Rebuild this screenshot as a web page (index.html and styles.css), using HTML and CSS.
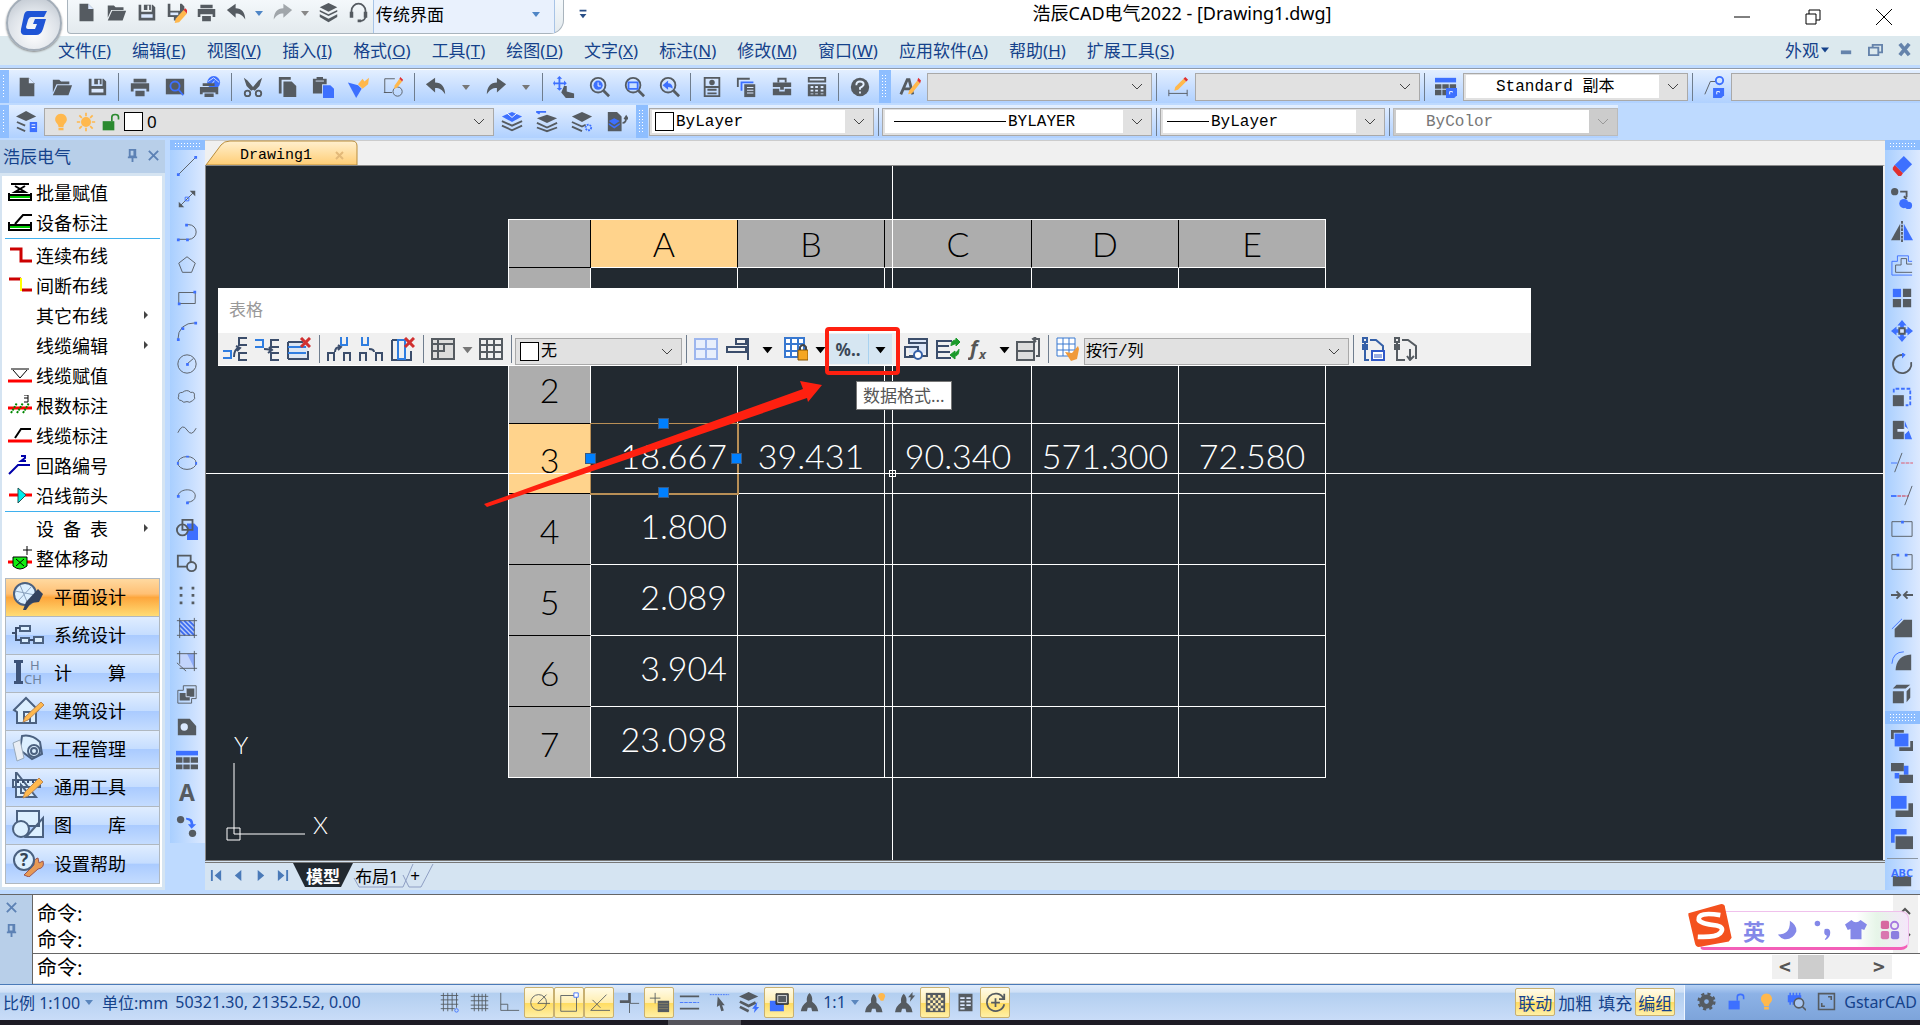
FILE: index.html
```html
<!DOCTYPE html>
<html lang="zh-CN">
  <head>
    <meta charset="UTF-8" />
    <meta name="viewport" content="width=device-width, initial-scale=1.0" />
    <title>浩辰CAD电气2022 - [Drawing1.dwg]</title>
    <link rel="stylesheet" href="styles.css">
  </head>
  <body>
    <!-- Icon sprite -->
    <svg class="sprite" aria-hidden="true">
      <symbol id="new" viewBox="0 0 24 24"><path class="d" d="M4 2h10l6 6v14H4z"/><path class="w" d="M14 2v6h6z"/></symbol>
      <symbol id="open" viewBox="0 0 24 24"><path class="d" d="M2 4h7l2 2h9v3H6L2 18zM7 10h16l-4 11H2z"/></symbol>
      <symbol id="save" viewBox="0 0 24 24"><path class="d" d="M3 3h3v8h12V3h1l3 3v15H3zM9 3h8v6h-2V4h-2v5H9z"/><path class="w" d="M6 14h13v4H6z"/></symbol>
      <symbol id="saveas" viewBox="0 0 24 24"><path class="d" d="M2 2h3v8h11V2h2l3 3v4l-9 12H9v-4H2z"/><path class="w" d="M5 12h9v3H5z"/><path class="o" d="M20 9l4 4-9 10-5 1 1-5z"/><path class="r" d="M20 9l2-2 4 4-2 2z"/></symbol>
      <symbol id="print" viewBox="0 0 24 24"><path class="d" d="M5 3h14v4H5zM2 8h20v9h-3v-3H5v3H2zM7 16h10v6H7z"/></symbol>
      <symbol id="preview" viewBox="0 0 24 24"><path class="d" d="M2 3h20v17H2z"/><circle class="bs" cx="12" cy="11" r="5"/><path class="bs" d="M16 15l5 6"/></symbol>
      <symbol id="publish" viewBox="0 0 24 24"><circle class="b" cx="16" cy="7" r="7"/><path d="M10 6l6-4 6 5M12 11l5-6" fill="none" stroke="#dbe8ff"/><path class="d" d="M4 8h13v3H4zM1 12h20v8h-3v-2H4v2H1zM6 19h10v4H6z"/></symbol>
      <symbol id="cut" viewBox="0 0 24 24"><path class="d" d="M2 2l4 3 6 7 6-7 4-3-3 9-5 5-2-1-2 1-5-5z"/><circle class="s2" cx="6" cy="19" r="3"/><circle class="s2" cx="18" cy="19" r="3"/></symbol>
      <symbol id="copy" viewBox="0 0 24 24"><path class="d" d="M2 1h13v3H5v15H2z"/><path class="d" d="M7 6h9l5 5v12H7z"/></symbol>
      <symbol id="paste" viewBox="0 0 24 24"><path class="d" d="M1 3h4V1h7v2h4v6h-5v10H1z"/><path class="w" d="M4 5h9v1H4z"/><path class="b" d="M12 10h8l4 4v10H12z"/></symbol>
      <symbol id="brush" viewBox="0 0 24 24"><path class="b" d="M1 7l11 3 4 4-6 10z"/><path class="o" d="M12 9l5-6 2 3 5-4-1 7-6 5z"/></symbol>
      <symbol id="edit" viewBox="0 0 24 24"><path class="s" d="M14 3H3v15h8M2 18l3 0"/><circle class="s" cx="17" cy="17" r="5"/><path class="o" d="M19 3l3 3-6 7-3 1 1-4z"/><path class="r" d="M19 3l1-2 3 3-1 2z"/></symbol>
      <symbol id="undo" viewBox="0 0 24 24"><path class="d" d="M1 9l10-7v5c7 0 11 5 11 13-3-5-6-7-11-7v5z"/></symbol>
      <symbol id="redo" viewBox="0 0 24 24"><path class="d" d="M23 9L13 2v5C6 7 2 12 2 20c3-5 6-7 11-7v5z"/></symbol>
      <symbol id="caret" viewBox="0 0 12 12"><path d="M2 4h8L6 9z" fill="currentColor"/></symbol>
      <symbol id="caretbar" viewBox="0 0 12 14"><path d="M2 2h8v2H2zM2 7h8l-4 5z" fill="currentColor"/></symbol>
      <symbol id="stack" viewBox="0 0 24 24"><path class="d" d="M12 1l10 5-10 5L2 6zM2 9l10 5 10-5v2l-10 5-10-5zM2 14l10 5 10-5v3l-10 6-10-6z"/></symbol>
      <symbol id="headset" viewBox="0 0 24 24"><path class="s2" d="M4 15V10a8 8 0 0 1 16 0v6q0 5-6 6"/><path class="d" d="M2 11h4v7H2zM18 11h4v7h-4zM11 20h4v3h-4z"/></symbol>
      <symbol id="pan" viewBox="0 0 24 24"><path class="b" d="M7 0l3 3H8v4h4V5l3 3-3 3V9H8v4h2l-3 3-3-3h2V9H2v2L0 8l2-3v2h4V3H4z"/><path class="d" d="M12 11h3v6l8 2v5H14l-5-6z"/></symbol>
      <symbol id="zoomrt" viewBox="0 0 24 24"><circle class="s2" cx="11" cy="10" r="8"/><circle class="b" cx="11" cy="10" r="5"/><path d="M11 7v4h3" fill="none" stroke="#fff"/><path class="s3" d="M17 16l6 6"/></symbol>
      <symbol id="zoomwin" viewBox="0 0 24 24"><circle class="s2" cx="11" cy="10" r="8"/><path class="bs" d="M6 7h10v7H6z"/><path class="s3" d="M17 16l6 6"/></symbol>
      <symbol id="zoomprev" viewBox="0 0 24 24"><circle class="s2" cx="11" cy="10" r="8"/><path class="b" d="M5 10l6-5v3q5 0 5 6-2-2-5-2v3z"/><path class="s3" d="M17 16l6 6"/></symbol>
      <symbol id="props" viewBox="0 0 24 24"><path class="s2" d="M4 2h16v20H4zM4 12h16M7 15h10M7 19h10"/><circle class="d" cx="12" cy="7" r="3"/></symbol>
      <symbol id="sheets" viewBox="0 0 24 24"><path class="s2" d="M2 12V3h13"/><path class="bs" d="M6 16V7h13"/><path class="d" d="M9 9h12v14H9z"/><path class="w" d="M12 12h7v1h-7zM12 15h7v1h-7zM12 18h7v1h-7z"/></symbol>
      <symbol id="case" viewBox="0 0 24 24"><path class="s2" d="M8 7V3h8v4"/><path class="d" d="M2 7h20v5h-8v3h-4v-3H2zM2 14h7v3h6v-3h7v7H2z"/></symbol>
      <symbol id="calc" viewBox="0 0 24 24"><path class="d" d="M2 1h20v6H2zM2 9h20v13H2z"/><path class="w" d="M4 3h16v2H4zM5 11h3v2H5zM10 11h3v2h-3zM16 11h3v2h-3zM5 15h3v2H5zM10 15h3v2h-3zM16 15h3v2h-3zM5 19h3v1H5zM10 19h3v1h-3zM16 19h3v1h-3z"/></symbol>
      <symbol id="help" viewBox="0 0 24 24"><circle class="d" cx="12" cy="12" r="10"/><path d="M8 10q0-4 4-4t4 3q0 2-4 4v2M12 17v2" fill="none" stroke="#e3efff" stroke-width="2"/></symbol>
      <symbol id="tstyle" viewBox="0 0 24 24"><path class="s3" d="M2 20L9 4h2l4 16M5 14h8"/><path class="o" d="M20 5l3 3-9 11-4 1 1-4z"/><path class="r" d="M20 5l1-3 3 3-1 3z"/></symbol>
      <symbol id="dstyle" viewBox="0 0 24 24"><path class="s" d="M2 15v7M22 15v7M2 19h20"/><path class="o" d="M18 3l3 3-9 9-4 1 1-4z"/><path class="r" d="M18 3l2-2 3 3-2 2z"/></symbol>
      <symbol id="tabstyle" viewBox="0 0 24 24"><path class="b" d="M0 2h23v5H0z"/><path class="d" d="M0 9h7v5H0zM8 9h7v5H8zM16 9h7v5h-7zM0 15h7v6H0zM8 15h5v6H8z"/><path class="b" d="M12 13h12v8l-3 3h-9z"/><path class="ws" d="M16 20v-3h3v1"/></symbol>
      <symbol id="mstyle" viewBox="0 0 24 24"><path class="s" d="M2 20L8 6h6"/><circle class="bs" cx="18" cy="5" r="4"/><path class="b" d="M11 13h12v8l-3 3h-9z"/><path class="ws" d="M15 20v-3h3v1"/></symbol>
      <symbol id="layers" viewBox="0 0 24 24"><path class="d" d="M11 0l11 6-11 5L0 6z"/><path class="s2" d="M1 12l9 4M1 18l9 4"/><path class="b" d="M15 12h8v11h-8z"/><path class="ws" d="M17 15h4M17 18h4"/></symbol>
      <symbol id="lay1" viewBox="0 0 24 24"><path class="b" d="M12 1l11 5-11 6L1 6z"/><path class="ws" d="M6 2l6 5 6-5"/><path class="s2" d="M1 11l11 5 11-5M1 16l11 5 11-5"/></symbol>
      <symbol id="lay2" viewBox="0 0 24 24"><path class="d" d="M12 4l11 4-11 5L1 8z"/><path class="s2" d="M1 13l11 5 11-5M1 18l11 4 11-4"/><path class="bs" d="M11 1H1m3-2L1 1l3 2"/></symbol>
      <symbol id="lay3" viewBox="0 0 24 24"><path class="d" d="M12 1l11 5-11 6L1 6z"/><path class="s2" d="M1 12l11 5 4-2M1 17l11 5"/><circle class="bs" cx="19" cy="18" r="3" stroke-dasharray="2 1"/></symbol>
      <symbol id="lay4" viewBox="0 0 24 24"><path class="d" d="M2 1h10l5 5v16H2z"/><path class="b" d="M9 8l6 3-6 4-6-4zM3 13l6 4 6-4v2l-6 4-6-4z"/><path class="s2" d="M18 13q4 0 4-6m-2 2l2-3 2 3"/></symbol>
      <symbol id="bulb" viewBox="0 0 24 24"><path class="o" d="M12 2c5 0 7 4 7 7 0 4-4 5-4 9H9c0-4-4-5-4-9 0-3 2-7 7-7zM9 19h6v3H9z"/></symbol>
      <symbol id="sun" viewBox="0 0 24 24"><circle class="o" cx="12" cy="12" r="6"/><path d="M12 1v4M12 19v4M1 12h4M19 12h4M4 4l3 3M17 17l3 3M4 20l3-3M17 7l3-3" stroke="#ffb84d" stroke-width="2"/></symbol>
      <symbol id="unlock" viewBox="0 0 24 24"><path d="M2 11h14v11H2z" fill="currentColor"/><path d="M13 11V6q0-3 4-3t4 3v3" fill="none" stroke="currentColor" stroke-width="2"/></symbol>
      <symbol id="chev" viewBox="0 0 12 12"><path d="M1 3l5 5 5-5" fill="none" stroke="currentColor"/></symbol>
      <symbol id="pin" viewBox="0 0 14 14"><path d="M4 1h6v7H4zM2 9h10M7 9v5M9 1v7" fill="none" stroke="currentColor" stroke-width="2"/></symbol>
      <symbol id="close" viewBox="0 0 14 14"><path d="M2 2l10 10M12 2L2 12" fill="none" stroke="currentColor" stroke-width="2"/></symbol>

      <!-- draw toolbar -->
      <symbol id="line" viewBox="0 0 24 24"><path class="s" d="M3 21L21 3"/><path class="b" d="M1 20h3v3H1zM20 1h3v3h-3z"/></symbol>
      <symbol id="ray" viewBox="0 0 24 24"><path class="s" d="M4 20L20 4"/><path class="d" d="M21 3v6l-6-6zM3 21v-6l6 6z"/><path class="bs1" d="M10 10h4v4h-4z"/></symbol>
      <symbol id="pline" viewBox="0 0 24 24"><path class="s" d="M2 20h12a8 8 0 0 0 0-16h-3"/><path class="b" d="M1 19h3v3H1zM11 19h3v3h-3zM10 3h3v3h-3z"/></symbol>
      <symbol id="polygon" viewBox="0 0 24 24"><path class="s" d="M12 3l9 7-4 10H7L3 10z"/></symbol>
      <symbol id="rect" viewBox="0 0 24 24"><path class="s" d="M3 6h18v12H3z"/><path class="b" d="M2 17h3v3H2zM19 4h3v3h-3z"/></symbol>
      <symbol id="arc" viewBox="0 0 24 24"><path class="s" d="M2 22Q2 3 22 3"/><path class="b" d="M1 20h3v3H1zM6 8h3v3H6zM20 2h3v3h-3z"/></symbol>
      <symbol id="circle" viewBox="0 0 24 24"><circle class="s" cx="12" cy="12" r="10"/><path class="s" d="M12 12l7-6"/><path class="b" d="M11 11h3v3h-3z"/></symbol>
      <symbol id="cloud" viewBox="0 0 24 24"><path class="s" d="M7 7q5-4 9 0 5-1 4 4 2 3-2 5-3 3-6 1-4 2-6-1-5-1-3-5-1-4 4-4z"/></symbol>
      <symbol id="spline" viewBox="0 0 24 24"><path class="s" d="M2 15Q7 4 12 12t10-2"/></symbol>
      <symbol id="ellipse" viewBox="0 0 24 24"><ellipse class="s" cx="12" cy="12" rx="10" ry="7"/><path class="b" d="M1 11h2v3H1zM21 11h2v3h-2zM11 4h3v2h-3z"/></symbol>
      <symbol id="earc" viewBox="0 0 24 24"><path class="s" d="M2 12C4 3 21 3 21 12q0 6-9 7"/><path class="b" d="M1 11h3v3H1zM11 18h3v3h-3z"/></symbol>
      <symbol id="block" viewBox="0 0 24 24"><path class="b" d="M12 6h8l4 4v14H12z"/><circle class="s2" cx="7" cy="13" r="6"/><path class="s2" d="M7 2h11v11H7z"/></symbol>
      <symbol id="mkblock" viewBox="0 0 24 24"><path class="s2" d="M13 17H2V5h14v7"/><circle class="s2" cx="17" cy="17" r="5"/></symbol>
      <symbol id="points" viewBox="0 0 24 24"><path class="d" d="M4 3h3v3H4zM17 3h3v3h-3zM4 11h3v3H4zM17 11h3v3h-3zM4 19h3v3H4zM17 19h3v3h-3z"/></symbol>
      <symbol id="hatch" viewBox="0 0 24 24"><path d="M4 4h16v16H4z" fill="#b9cdfa"/><path d="M4 4l16 16M9 4l11 11M14 4l6 6M4 9l11 11M4 14l6 6" stroke="#3d6cf0" stroke-width="2"/><path class="s" d="M1 4h22M1 20h22M4 1v22M20 1v22"/></symbol>
      <symbol id="gradient" viewBox="0 0 24 24"><path d="M4 4h16v16H4z" fill="#c3d4fc"/><path d="M12 4h8v16z" fill="#8eabf8"/><path class="s" d="M1 4h22M4 20h19M4 1v14M20 1v22M1 14l10 9"/></symbol>
      <symbol id="boundary" viewBox="0 0 24 24"><path class="d" d="M11 6h9v9h-5v4H4v-8h7z"/><path class="s" d="M8 3h14v14h-5v5H2V8h6z"/><path d="M11 6v5M11 11v4h4" fill="none" stroke="#dce8ff"/></symbol>
      <symbol id="wipe" viewBox="0 0 24 24"><path class="d" d="M2 3h13l7 8v10H2z"/><circle class="w" cx="9" cy="12" r="4"/></symbol>
      <symbol id="table" viewBox="0 0 24 24"><path class="b" d="M0 2h24v5H0z"/><path class="d" d="M0 9h7v6H0zM8 9h7v6H8zM16 9h8v6h-8zM0 17h7v5H0zM8 17h7v5H8zM16 17h8v5h-8z"/></symbol>
      <symbol id="text" viewBox="0 0 24 24"><text class="d" x="12" y="21" font-size="25" font-weight="700" text-anchor="middle">A</text></symbol>
      <symbol id="addsel" viewBox="0 0 24 24"><circle class="d" cx="5" cy="5" r="4"/><circle class="d" cx="18" cy="20" r="4"/><path class="b" d="M11 3q8 0 8 7h3l-5 5-4-5h3q0-4-5-5z"/></symbol>

      <!-- modify toolbar -->
      <symbol id="erase" viewBox="0 0 24 24"><path class="b" d="M14 1l9 9-10 10L4 11z"/><path class="r" d="M4 11l9 9-2 3H8l-6-7v-2z"/></symbol>
      <symbol id="copyobj" viewBox="0 0 24 24"><circle class="d" cx="4" cy="4" r="4"/><path class="s2" d="M10 4h7v6m-3-1l3 3"/><circle class="b" cx="14" cy="17" r="5"/><circle class="b" cx="19" cy="19" r="4"/></symbol>
      <symbol id="mirror" viewBox="0 0 24 24"><path class="d" d="M10 3v18H0z"/><path class="b" d="M14 3v18h10z"/><path class="s2" d="M12 0v24" stroke-dasharray="3 1"/></symbol>
      <symbol id="offset" viewBox="0 0 24 24"><path class="s" d="M23 11h-6V5h-6v7H5v8h18"/><path class="bs1" d="M23 8h-4V2H7v6H1v15h22"/></symbol>
      <symbol id="array" viewBox="0 0 24 24"><path class="b" d="M2 2h9v9H2z"/><path class="d" d="M13 2h9v9h-9zM2 13h9v9H2zM13 13h9v9h-9z"/></symbol>
      <symbol id="move" viewBox="0 0 24 24"><path class="b" d="M12 0l5 6h-3v4h4V7l6 5-6 5v-3h-4v4h3l-5 6-5-6h3v-4H6v3l-6-5 6-5v3h4V6H7z"/><path d="M9 9h6v6H9z" fill="#dbe8ff" stroke="#555b61" stroke-width="2"/></symbol>
      <symbol id="rotate" viewBox="0 0 24 24"><path class="s2" d="M12 2a10 10 0 1 0 10 8"/><path class="b" d="M12-1l4 3-4 4z"/></symbol>
      <symbol id="scale" viewBox="0 0 24 24"><path class="d" d="M2 10h12v12H2z"/><path class="bs" d="M3 7V3h18v18h-5" stroke-dasharray="4 2"/></symbol>
      <symbol id="stretch" viewBox="0 0 24 24"><path class="d" d="M2 2h12v20H2z"/><path class="b" d="M15 2l8 20h-8z"/><path class="w" d="M7 11h8V8l5 4-5 5v-3H7z"/></symbol>
      <symbol id="trim" viewBox="0 0 24 24"><path class="s" d="M12 1L4 22"/><path class="bs1" d="M0 12h7"/><path d="M11 12h13" stroke="#e05060" stroke-dasharray="4 1"/></symbol>
      <symbol id="extend" viewBox="0 0 24 24"><path class="s" d="M23 1l-8 21"/><path class="bs" d="M0 12h6"/><path d="M7 12h12" stroke="#d02030" stroke-dasharray="4 1"/></symbol>
      <symbol id="breakpt" viewBox="0 0 24 24"><path class="s" d="M1 4h22v16H1z"/><path class="b" d="M11 3h3v3h-3z"/></symbol>
      <symbol id="break" viewBox="0 0 24 24"><path class="s" d="M7 4H1v16h22V4h-6"/><path class="b" d="M6 3h3v3H6zM15 3h3v3h-3z"/></symbol>
      <symbol id="join" viewBox="0 0 24 24"><path class="s2" d="M0 12h10M6 8l4 4-4 4M24 12H14M18 8l-4 4 4 4"/></symbol>
      <symbol id="chamfer" viewBox="0 0 24 24"><path class="d" d="M14 3h9v19H4v-9z"/><path class="bs1" d="M1 13L12 2"/></symbol>
      <symbol id="fillet" viewBox="0 0 24 24"><path class="d" d="M22 5v17H5Q6 6 22 5z"/><path class="bs1" d="M1 15Q2 2 14 2"/></symbol>
      <symbol id="explode" viewBox="0 0 24 24"><path class="d" d="M2 9h12v13H2zM2 6l4-4h15l-5 4zM17 9l4-4v11l-4 5z"/></symbol>
      <symbol id="front" viewBox="0 0 24 24"><path class="d" d="M0 1h14v3H3v7H0zM21 13h3v11H9v-4h12z"/><path class="b" d="M4 5h15v14H4z"/></symbol>
      <symbol id="back" viewBox="0 0 24 24"><path class="b" d="M14 4h5v10h-5zM4 12h5v6H4z"/><path class="d" d="M0 1h14v9H0zM9 14h15v9H9z"/></symbol>
      <symbol id="above" viewBox="0 0 24 24"><path class="d" d="M19 9h5v15H5v-7h14z"/><path class="b" d="M0 1h17v14H0z"/></symbol>
      <symbol id="below" viewBox="0 0 24 24"><path class="b" d="M0 1h17v6H4v9H0z"/><path class="d" d="M5 9h19v14H5z"/></symbol>
      <symbol id="abc" viewBox="0 0 24 24"><path class="d" d="M2 10h20v11H2z"/><text class="b" x="12" y="11" font-size="12" font-weight="700" text-anchor="middle">ABC</text></symbol>

      <!-- electrical palette -->
      <symbol id="e1" viewBox="0 0 24 20"><path class="k" d="M3 2h18M7 4l10 6H7l10-6M1 13h22"/><path d="M2 15h20" stroke="#0c0" stroke-width="2"/><path class="k" d="M1 11v7h22v-7"/></symbol>
      <symbol id="e2" viewBox="0 0 24 20"><path class="k" d="M7 12l8-9h9M1 13h22M1 10v8h22v-8"/><path d="M2 15h20" stroke="#0c0" stroke-width="2"/></symbol>
      <symbol id="e3" viewBox="0 0 24 20"><path d="M2 4h11v12h11" fill="none" stroke="#c00" stroke-width="3"/></symbol>
      <symbol id="e4" viewBox="0 0 24 20"><path d="M1 4h12M14 15h10" stroke="#c00" stroke-width="3"/><path d="M13 3v13" stroke="#ff0" stroke-width="2"/></symbol>
      <symbol id="e5" viewBox="0 0 24 20"><path d="M3 4h18M5 5l7 8 7-8" fill="none" stroke="#000"/><path class="rl" d="M0 16h24"/></symbol>
      <symbol id="e6" viewBox="0 0 24 20"><path class="rl" d="M0 13h24"/><path d="M3 18l6-10M9 18l6-10M15 18l6-10" stroke="#080" stroke-width="2" stroke-dasharray="2 1"/><path d="M16 0h4v7h-4M16 3h4" fill="none" stroke="#000"/></symbol>
      <symbol id="e7" viewBox="0 0 24 20"><path class="k" d="M7 13l6-9h10"/><path class="rl" d="M0 16h24"/></symbol>
      <symbol id="e8" viewBox="0 0 24 20"><path d="M1 19l9-9h12M13 1h4v2l-4 3h5" fill="none" stroke="#00a" stroke-width="2"/></symbol>
      <symbol id="e9" viewBox="0 0 24 20"><path class="rl" d="M1 10h23"/><path d="M10 3l8 7-8 8z" fill="#0ee" stroke="#255"/></symbol>
      <symbol id="e10" viewBox="0 0 24 24"><path class="rl" d="M0 16h24"/><path d="M5 11h14v9q-7 6-14 0z" fill="#1e1" stroke="#000"/><path d="M8 13l8 7M16 13l-8 7M15 4h9M19 0v9" stroke="#000"/></symbol>

      <symbol id="m1" viewBox="0 0 32 28"><circle class="nf" cx="13" cy="12" r="11"/><path d="M3 9l20 4M8 3l8 19M20 4L6 19" stroke="#8ba3bf"/><path d="M14 20l12-13 5 5-4 8-8 1-5 7h-3z" fill="#34435e"/></symbol>
      <symbol id="m2" viewBox="0 0 32 28"><path class="nf" d="M8 6h10v5H8zM9 18h8v5H9zM22 17h9v6h-9z"/><path class="n" d="M17 20h5M8 8H4v12h5M0 13h4"/></symbol>
      <symbol id="m3" viewBox="0 0 32 28"><path d="M2 2h9v3H9v18h2v3H2v-3h2V5H2z" fill="#3d5379"/><text x="18" y="12" font-size="13" fill="#6d819c">H</text><text x="12" y="26" font-size="13" fill="#6d819c">CH</text></symbol>
      <symbol id="m4" viewBox="0 0 32 28"><path class="nf" d="M2 14L14 2l12 12-2 2v11H5V16zM12 27V16h6v11"/><path d="M29 6l3 3-16 15-5 2 2-5z" fill="#ffb84d" stroke="#b85"/></symbol>
      <symbol id="m5" viewBox="0 0 32 28"><path class="nf" d="M10 2q10-2 18 6l2 12-10 5-12-9z"/><path d="M1 9l7-3 4 18-7 3z" fill="#e9eef5" stroke="#9ab"/><circle class="nf" cx="22" cy="17" r="6"/><circle class="nf" cx="22" cy="17" r="3"/></symbol>
      <symbol id="m6" viewBox="0 0 32 28"><path class="nf" d="M4 0l20 25H4zM9 13l7 8H9zM1 8h27v7H1z"/><path class="n" d="M6 8v3M11 8v3M16 8v3M21 8v3"/><path d="M27 6l4 4-15 14-5 2 2-6z" fill="#ffb84d" stroke="#b85"/></symbol>
      <symbol id="m7" viewBox="0 0 32 28"><path class="nf" d="M5 1h22v15H5zM31 8v19H14z"/><circle class="nf" cx="9" cy="19" r="8"/></symbol>
      <symbol id="m8" viewBox="0 0 32 28"><path d="M12 26l10-10q-1-6 4-7l1 5 4-2q2 7-5 8l-9 8z" fill="#e79a55" stroke="#955"/><circle class="nf" cx="12" cy="11" r="10"/><text x="12" y="17" font-size="17" font-weight="700" fill="#345" text-anchor="middle">?</text></symbol>

      <!-- table panel -->
      <symbol id="t1" viewBox="0 0 24 24"><path class="n" d="M24 1h-8v7h8M24 16h-8v7h8M11 20q0-8 5-9m-3-2l4 2-3 3"/><path class="bl" d="M0 14h8v7H0"/></symbol>
      <symbol id="t2" viewBox="0 0 24 24"><path class="n" d="M24 3h-8v7h8M24 16h-8v7h8M9 12q3 0 7 1m-2-3l3 3-4 3"/><path class="bl" d="M0 3h8v7H0"/></symbol>
      <symbol id="t3" viewBox="0 0 24 24"><path d="M1 5h20v17H1z" fill="#dce6f3"/><path class="n" d="M1 5h15M1 22h20v-8M1 5v17"/><path class="bl" d="M1 10h18M1 16h18"/><path class="x" d="M14 1l9 9M23 1l-9 9"/></symbol>
      <symbol id="t4" viewBox="0 0 24 24"><path class="n" d="M1 24v-8h6v8M17 24v-8h6v8M8 15q0-5 5-5m-2-2l3 2-3 3"/><path class="bl" d="M14 0v8h6V0"/></symbol>
      <symbol id="t5" viewBox="0 0 24 24"><path class="n" d="M1 24v-8h6v8M17 24v-8h6v8M10 12q5 0 5 3"/><path class="bl" d="M3 0v8h6V0"/></symbol>
      <symbol id="t6" viewBox="0 0 24 24"><path class="n" d="M1 3v20h19v-9M1 3h10"/><path class="bl" d="M7 3v19h7V3z"/><path class="x" d="M14 1l9 9M23 1l-9 9"/></symbol>
      <symbol id="t7" viewBox="0 0 24 24"><path d="M1 2h22v20H1z" fill="#dcdcdc"/><path class="s2" d="M1 2h22v20H1zM1 7h22M7 2v20M7 14h6v-7M1 14h6"/></symbol>
      <symbol id="t8" viewBox="0 0 24 24"><path class="s2" d="M1 2h22v20H1zM1 8h22M1 15h22M8 2v20M15 2v20"/></symbol>
      <symbol id="t9" viewBox="0 0 24 24"><path d="M1 2h22v20H1zM12 2v20M1 12h22" fill="#e8effc" stroke="#9db6ee" stroke-width="2"/></symbol>
      <symbol id="t10" viewBox="0 0 24 24"><path class="n" d="M22 1v22M10 2h10v5H10zM1 10h19v5H1z"/></symbol>
      <symbol id="t11" viewBox="0 0 24 24"><path d="M1 1h19v19H1zM7 1v19M14 1v19M1 7h19M1 14h19" fill="#fff" stroke="#3878d0" stroke-width="2"/><path d="M14 13h10v10H14z" fill="#f5a623" stroke="#850"/><path d="M16 13v-3q3-4 6 0v3" fill="none" stroke="#444" stroke-width="2"/></symbol>
      <symbol id="t12" viewBox="0 0 24 24"><path d="M5 2h18v14H5z" fill="#dce6f8"/><path class="n" d="M5 7V2h18v17H5M5 6h18M1 10h13v10H1z"/><circle cx="14" cy="18" r="4" fill="#fff" stroke="#3560a8" stroke-width="2"/></symbol>
      <symbol id="t13" viewBox="0 0 24 24"><path class="n" d="M16 4H1v5h12M1 9v6h13M1 15v6h14"/><path d="M15 9q0-6 5-6V1l4 4-4 4V7M23 12q0 7-4 7v3l-5-4 5-4v2" fill="#1a9a2a" stroke="#1a9a2a"/></symbol>
      <symbol id="t14" viewBox="0 0 24 24"><text x="2" y="18" font-size="20" font-style="italic" font-weight="700" fill="#555">f</text><text x="11" y="22" font-size="13" font-style="italic" font-weight="700" fill="#555">x</text></symbol>
      <symbol id="t15" viewBox="0 0 24 24"><path d="M1 5h17v18H1z" fill="#ddd"/><path class="s2" d="M1 5h17v18H1zM1 14h17M20 19h3V2h-6m3-2l-3 2 3 3"/></symbol>
      <symbol id="t16" viewBox="0 0 24 24"><path d="M1 1h18v18H1zM7 1v18M13 1v18M1 7h18M1 13h18" fill="#fff" stroke="#3878d0"/><path d="M9 15l7 1 6-7 1 3-2 10-6 2z" fill="#f09a3a"/></symbol>
      <symbol id="t17" viewBox="0 0 24 24"><path d="M2 1h4v4H2zM2 8h4v4H2zM4 5v18h4M9 3h6l7 6v4" fill="none" stroke="#3560a8" stroke-width="2"/><path d="M11 14h12v9H11z" fill="#fff" stroke="#3058c8" stroke-width="2"/><path d="M13 18h8M13 20h8" stroke="#3058c8"/></symbol>
      <symbol id="t18" viewBox="0 0 24 24"><path class="s2" d="M2 1h4v4H2zM2 8h4v4H2zM4 5v18h8M9 3h6l8 6v13M17 12v10m-3-3l3 4 4-4"/></symbol>

      <!-- status bar -->
      <symbol id="s1" viewBox="0 0 24 24"><path class="s" d="M2 4h20M2 9h20M2 14h20M2 19h16M5 1v21M10 1v21M15 1v21M20 1v17"/><circle class="bs1" cx="20" cy="21" r="2"/></symbol>
      <symbol id="s2" viewBox="0 0 24 24"><path class="s" d="M2 5h20M2 10h20M2 15h20M2 19h20M6 2v20M11 2v20M15 2v20M19 2v20"/></symbol>
      <symbol id="s3" viewBox="0 0 24 24"><path class="s" d="M2 1v20h21M2 14h8v7"/></symbol>
      <symbol id="s4" viewBox="0 0 24 24"><circle class="s" cx="11" cy="12" r="9"/><path class="s" d="M10 13h14M10 13L20 3"/></symbol>
      <symbol id="s5" viewBox="0 0 24 24"><path class="s" d="M2 4h18v18H2z"/><path d="M17 1h5v5h-5z" fill="#fff" stroke="#3d70ff"/></symbol>
      <symbol id="s6" viewBox="0 0 24 24"><path class="s" d="M20 3L2 21h22M4 9l9 9"/></symbol>
      <symbol id="s7" viewBox="0 0 24 24"><path class="s3" d="M1 11h11V1"/><path class="s" d="M12 24V13h11"/></symbol>
      <symbol id="s8" viewBox="0 0 24 24"><path class="s" d="M1 7h12M7 1v12"/><path class="d" d="M10 10h13v13H10z"/><path d="M11 13h11M11 16h11M11 19h11" stroke="#8a8468"/></symbol>
      <symbol id="s9" viewBox="0 0 24 24"><path class="s2" d="M1 5h22M1 19h22"/><path class="bs1" d="M1 12h22" stroke-dasharray="4 1"/></symbol>
      <symbol id="s10" viewBox="0 0 24 24"><path class="bs1" d="M1 3h22" stroke-dasharray="2 1"/><path class="d" d="M10 5l8 10h-3l2 6-3 1-2-7-3 2z"/></symbol>
      <symbol id="s11" viewBox="0 0 24 24"><path class="d" d="M11 0l11 5-11 5L0 5z"/><path class="s3" d="M1 11l10 5 8-4M1 17l10 5"/><path class="b" d="M21 11l-6 8h3l-1 5 6-7h-3z"/></symbol>
      <symbol id="s12" viewBox="0 0 24 24"><path class="b" d="M1 10h16v12H1z"/><path d="M8 2h14v12H8z" fill="#555b61" stroke="#222"/><path d="M10 4h10v8H10z" fill="none" stroke="#ddd"/></symbol>
      <symbol id="s13" viewBox="0 0 24 24"><path class="d" d="M12 1q4 4 3 10 6 4 7 11h-7l-1-4h-4l-1 4H2q1-7 7-11-1-6 3-10z"/></symbol>
      <symbol id="s14" viewBox="0 0 24 24"><path class="d" d="M10 2q4 4 3 10 6 4 7 11h-7l-1-4H8l-1 4H0q1-7 7-11-1-6 3-10z"/><path class="o" d="M19 1q4 0 4 4l-2 5h-3l-3-5q0-4 4-4z"/></symbol>
      <symbol id="s15" viewBox="0 0 24 24"><path class="d" d="M10 2q4 4 3 10 6 4 7 11h-7l-1-4H8l-1 4H0q1-7 7-11-1-6 3-10zM20 0l-5 6h3l-1 5 6-7h-3z"/></symbol>
      <symbol id="s16" viewBox="0 0 24 24"><path class="d" d="M1 1h22v22H1z"/><path d="M3 5h18M3 11h18M3 17h18" stroke="#ffedb0" stroke-width="3" stroke-dasharray="3 3"/><path d="M6 8h15M6 14h15M6 20h15" stroke="#ffedb0" stroke-width="3" stroke-dasharray="3 3"/></symbol>
      <symbol id="s17" viewBox="0 0 24 24"><path class="d" d="M4 2h16v20H4z"/><path class="w" d="M6 6h5v2H6zM13 6h5v2h-5zM6 10h5v2H6zM13 10h5v2h-5zM6 14h5v2H6zM13 14h5v2h-5zM6 18h5v2H6z"/></symbol>
      <symbol id="s18" viewBox="0 0 24 24"><path class="s2" d="M21 7a10 10 0 1 0 1 7M22 2v6h-6M7 12h10M12 7v10"/></symbol>
      <symbol id="gear" viewBox="0 0 24 24"><circle cx="12" cy="12" r="6" fill="none" stroke="#555b61" stroke-width="6"/><circle cx="12" cy="12" r="10" fill="none" stroke="#555b61" stroke-width="3" stroke-dasharray="4 4"/></symbol>
      <symbol id="chip" viewBox="0 0 24 24"><path class="b" d="M1 4h17v9H1z"/><path class="bs" d="M4 1v15M8 1v15M12 1v5M16 1v5"/><circle cx="15" cy="14" r="6" fill="#aac6f0" stroke="#555b61" stroke-width="2"/><path class="s2" d="M19 18l5 5"/></symbol>
      <symbol id="full" viewBox="0 0 24 24"><path class="s2" d="M2 2h20v20H2zM14 6h4v4M6 14v4h4"/></symbol>
    </svg>

    <header class="titlebar">
      <div class="quick">
        <button class="qb" title="新建"><svg><use href="#new"/></svg></button>
        <button class="qb" title="打开"><svg><use href="#open"/></svg></button>
        <button class="qb" title="保存"><svg><use href="#save"/></svg></button>
        <button class="qb" title="另存为"><svg><use href="#saveas"/></svg></button>
        <button class="qb" title="打印"><svg><use href="#print"/></svg></button>
        <button class="qb" title="放弃"><svg><use href="#undo"/></svg></button>
        <button class="qc" title="放弃列表"><svg><use href="#caret"/></svg></button>
        <button class="qb dim" title="重做"><svg><use href="#redo"/></svg></button>
        <button class="qc gray" title="重做列表"><svg><use href="#caret"/></svg></button>
        <button class="qb" title="图层"><svg><use href="#stack"/></svg></button>
        <button class="qb" title="客服"><svg><use href="#headset"/></svg></button>
        <label class="workspace">
          <select aria-label="工作空间"><option>传统界面</option></select>
          <svg><use href="#caret"/></svg>
        </label>
      </div>
      <button class="customize" title="自定义"><svg><use href="#caretbar"/></svg></button>
      <h1 class="caption">浩辰CAD电气2022 - [Drawing1.dwg]</h1>
      <div class="winbtns">
        <button title="最小化"><svg viewBox="0 0 16 16"><path d="M0 8h16"/></svg></button>
        <button title="还原"><svg viewBox="0 0 16 16"><path d="M1 5h10v10H1zM4 5V1h11v10h-4"/></svg></button>
        <button title="关闭"><svg viewBox="0 0 16 16"><path d="M0 0l16 16M16 0L0 16"/></svg></button>
      </div>
      <button class="applogo" title="浩辰">
        <svg viewBox="0 0 28 28"><path d="M8 2h19l-3 6H11q-2 0-3 3l-2 7q0 2 2 2h7l2-5h-4l2-5h11l-3 10q-2 6-7 6H5q-5 0-4-6L4 6q1-4 4-4z" fill="#1f55d6"/></svg>
      </button>
    </header>

    <nav class="menubar">
      <a href="#">文件(<u>F</u>)</a>
      <a href="#">编辑(<u>E</u>)</a>
      <a href="#">视图(<u>V</u>)</a>
      <a href="#">插入(<u>I</u>)</a>
      <a href="#">格式(<u>O</u>)</a>
      <a href="#">工具(<u>T</u>)</a>
      <a href="#">绘图(<u>D</u>)</a>
      <a href="#">文字(<u>X</u>)</a>
      <a href="#">标注(<u>N</u>)</a>
      <a href="#">修改(<u>M</u>)</a>
      <a href="#">窗口(<u>W</u>)</a>
      <a href="#">应用软件(<u>A</u>)</a>
      <a href="#">帮助(<u>H</u>)</a>
      <a href="#">扩展工具(<u>S</u>)</a>
      <div class="mdi">
        <button class="look">外观<svg><use href="#caret"/></svg></button>
        <button title="最小化"><svg viewBox="0 0 16 16"><path d="M2 11h11" stroke-width="4"/></svg></button>
        <button title="还原"><svg viewBox="0 0 16 16"><path d="M1 6h10v8H1zM5 6V3h10v8h-4" stroke-width="2"/></svg></button>
        <button title="关闭"><svg viewBox="0 0 16 16"><path d="M3 2l10 12M13 2L3 14" stroke-width="4"/></svg></button>
      </div>
    </nav>

    <div class="toolbars">
      <div class="toolbar grow">
        <i class="grip"></i>
        <button class="tb" title="新建"><svg><use href="#new"/></svg></button>
        <button class="tb" title="打开"><svg><use href="#open"/></svg></button>
        <button class="tb" title="保存"><svg><use href="#save"/></svg></button>
        <i class="sep"></i>
        <button class="tb" title="打印"><svg><use href="#print"/></svg></button>
        <button class="tb" title="预览"><svg><use href="#preview"/></svg></button>
        <button class="tb" title="发布"><svg><use href="#publish"/></svg></button>
        <i class="sep"></i>
        <button class="tb" title="剪切"><svg><use href="#cut"/></svg></button>
        <button class="tb" title="复制"><svg><use href="#copy"/></svg></button>
        <button class="tb" title="粘贴"><svg><use href="#paste"/></svg></button>
        <button class="tb" title="特性匹配"><svg><use href="#brush"/></svg></button>
        <button class="tb" title="块编辑"><svg><use href="#edit"/></svg></button>
        <i class="sep"></i>
        <button class="tb" title="放弃"><svg><use href="#undo"/></svg></button>
        <button class="tc" title="放弃列表"><svg><use href="#caret"/></svg></button>
        <button class="tb" title="重做"><svg><use href="#redo"/></svg></button>
        <button class="tc" title="重做列表"><svg><use href="#caret"/></svg></button>
        <i class="sep"></i>
        <button class="tb" title="平移"><svg><use href="#pan"/></svg></button>
        <button class="tb" title="实时缩放"><svg><use href="#zoomrt"/></svg></button>
        <button class="tb" title="窗口缩放"><svg><use href="#zoomwin"/></svg></button>
        <button class="tb" title="缩放上一个"><svg><use href="#zoomprev"/></svg></button>
        <i class="sep"></i>
        <button class="tb" title="特性"><svg><use href="#props"/></svg></button>
        <button class="tb" title="图纸集"><svg><use href="#sheets"/></svg></button>
        <button class="tb" title="工具选项板"><svg><use href="#case"/></svg></button>
        <button class="tb" title="计算器"><svg><use href="#calc"/></svg></button>
        <i class="sep"></i>
        <button class="tb" title="帮助"><svg><use href="#help"/></svg></button>
        <i class="grip mid"></i>
        <button class="tb" title="文字样式"><svg><use href="#tstyle"/></svg></button>
        <label class="combo w225"><select aria-label="文字样式"><option></option></select><svg><use href="#chev"/></svg></label>
        <i class="sep"></i>
        <button class="tb" title="标注样式"><svg><use href="#dstyle"/></svg></button>
        <label class="combo w225"><select aria-label="标注样式"><option></option></select><svg><use href="#chev"/></svg></label>
        <i class="sep"></i>
        <button class="tb" title="表格样式"><svg><use href="#tabstyle"/></svg></button>
        <label class="combo w225 white"><span class="field indent"><select aria-label="表格样式"><option>Standard 副本</option></select></span><svg><use href="#chev"/></svg></label>
        <i class="sep"></i>
        <button class="tb" title="引线样式"><svg><use href="#mstyle"/></svg></button>
        <label class="combo fill"><select aria-label="引线样式"><option></option></select></label>
      </div>
      <div class="toolbar">
        <i class="grip"></i>
        <button class="tb" title="图层特性"><svg><use href="#layers"/></svg></button>
        <label class="combo w450">
          <svg class="st"><use href="#bulb"/></svg><svg class="st"><use href="#sun"/></svg><svg class="st green"><use href="#unlock"/></svg><i class="swatch"></i>
          <select class="sans" aria-label="图层"><option>0</option></select><svg><use href="#chev"/></svg>
        </label>
        <button class="tb" title="置为当前"><svg><use href="#lay1"/></svg></button>
        <button class="tb" title="上一个图层"><svg><use href="#lay2"/></svg></button>
        <button class="tb" title="图层状态"><svg><use href="#lay3"/></svg></button>
        <button class="tb" title="图层转换"><svg><use href="#lay4"/></svg></button>
        <i class="grip mid"></i>
        <label class="combo w225 white"><span class="field"><i class="swatch"></i><select aria-label="颜色"><option>ByLayer</option></select></span><svg><use href="#chev"/></svg></label>
        <i class="sep"></i>
        <label class="combo w270 white"><span class="field"><i class="rule long"></i><select aria-label="线型"><option>BYLAYER</option></select></span><svg><use href="#chev"/></svg></label>
        <i class="sep"></i>
        <label class="combo w225 white"><span class="field"><i class="rule"></i><select aria-label="线宽"><option>ByLayer</option></select></span><svg><use href="#chev"/></svg></label>
        <i class="sep"></i>
        <label class="combo w225 white off"><span class="field indent"><select aria-label="打印样式" disabled><option>ByColor</option></select></span><svg><use href="#chev"/></svg></label>
      </div>
    </div>

    <main class="workarea">
      <aside class="palette">
        <div class="palette-head">浩辰电气<button title="固定"><svg><use href="#pin"/></svg></button><button title="关闭"><svg><use href="#close"/></svg></button></div>
        <div class="palette-body">
          <div class="commands">
            <button><svg><use href="#e1"/></svg>批量赋值</button>
            <button><svg><use href="#e2"/></svg>设备标注</button>
            <hr>
            <button><svg><use href="#e3"/></svg>连续布线</button>
            <button><svg><use href="#e4"/></svg>间断布线</button>
            <button class="sub"><svg></svg>其它布线</button>
            <button class="sub"><svg></svg>线缆编辑</button>
            <button><svg><use href="#e5"/></svg>线缆赋值</button>
            <button><svg><use href="#e6"/></svg>根数标注</button>
            <button><svg><use href="#e7"/></svg>线缆标注</button>
            <button><svg><use href="#e8"/></svg>回路编号</button>
            <button><svg><use href="#e9"/></svg>沿线箭头</button>
            <hr>
            <button class="sub"><svg></svg><span class="spread"><b>设</b><b>备</b><b>表</b></span></button>
            <button><svg class="tall"><use href="#e10"/></svg>整体移动</button>
          </div>
          <div class="groups">
            <button class="on"><svg><use href="#m1"/></svg>平面设计</button>
            <button><svg><use href="#m2"/></svg>系统设计</button>
            <button><svg><use href="#m3"/></svg><span class="spread"><b>计</b><b>算</b></span></button>
            <button><svg><use href="#m4"/></svg>建筑设计</button>
            <button><svg><use href="#m5"/></svg>工程管理</button>
            <button><svg><use href="#m6"/></svg>通用工具</button>
            <button><svg><use href="#m7"/></svg><span class="spread"><b>图</b><b>库</b></span></button>
            <button><svg><use href="#m8"/></svg>设置帮助</button>
          </div>
        </div>
      </aside>

      <div class="vbar">
        <i class="hgrip"></i>
        <button title="直线"><svg><use href="#line"/></svg></button>
        <button title="构造线"><svg><use href="#ray"/></svg></button>
        <button title="多段线"><svg><use href="#pline"/></svg></button>
        <button title="正多边形"><svg><use href="#polygon"/></svg></button>
        <button title="矩形"><svg><use href="#rect"/></svg></button>
        <button title="圆弧"><svg><use href="#arc"/></svg></button>
        <button title="圆"><svg><use href="#circle"/></svg></button>
        <button title="云线"><svg><use href="#cloud"/></svg></button>
        <button title="样条曲线"><svg><use href="#spline"/></svg></button>
        <button title="椭圆"><svg><use href="#ellipse"/></svg></button>
        <button title="椭圆弧"><svg><use href="#earc"/></svg></button>
        <button title="插入块"><svg><use href="#block"/></svg></button>
        <button title="创建块"><svg><use href="#mkblock"/></svg></button>
        <button title="点"><svg><use href="#points"/></svg></button>
        <button title="图案填充"><svg><use href="#hatch"/></svg></button>
        <button title="渐变色"><svg><use href="#gradient"/></svg></button>
        <button title="面域"><svg><use href="#boundary"/></svg></button>
        <button title="区域覆盖"><svg><use href="#wipe"/></svg></button>
        <button title="表格"><svg><use href="#table"/></svg></button>
        <button title="多行文字"><svg><use href="#text"/></svg></button>
        <button title="添加选定对象"><svg><use href="#addsel"/></svg></button>
      </div>

      <section class="document">
        <div class="doctabs">
          <svg viewBox="0 0 152 25">
            <defs><linearGradient id="tabfill" x2="0" y2="1"><stop stop-color="#fff0cf"/><stop offset="1" stop-color="#ffcd75"/></linearGradient></defs>
            <path d="M0 25L15 5Q18 1 24 1h122q5 0 5 5v19z" fill="url(#tabfill)"/>
            <path d="M130 12l7 7M137 12l-7 7" stroke="#e3b979" stroke-width="2"/>
          </svg>
          <button>Drawing1</button>
        </div>

        <div class="canvas">
          <table class="sheet">
            <thead>
              <tr><th></th><th class="hot">A</th><th>B</th><th>C</th><th>D</th><th>E</th></tr>
            </thead>
            <tbody>
              <tr class="first"><th>1</th><td></td><td></td><td></td><td></td><td></td></tr>
              <tr class="short"><th>2</th><td></td><td></td><td></td><td></td><td></td></tr>
              <tr class="short"><th class="hot">3</th><td class="picked">18.667<i class="n"></i><i class="e"></i><i class="s"></i><i class="w"></i></td><td>39.431</td><td>90.340</td><td>571.300</td><td>72.580</td></tr>
              <tr><th>4</th><td>1.800</td><td></td><td></td><td></td><td></td></tr>
              <tr><th>5</th><td>2.089</td><td></td><td></td><td></td><td></td></tr>
              <tr><th>6</th><td>3.904</td><td></td><td></td><td></td><td></td></tr>
              <tr><th>7</th><td>23.098</td><td></td><td></td><td></td><td></td></tr>
            </tbody>
          </table>

          <svg class="ucs" viewBox="0 0 110 110">
            <path d="M9 27v71h71M2 92h13v12H2z"/>
            <text x="9" y="18">Y</text><text x="88" y="98">X</text>
          </svg>

          <i class="cross-h"></i>
          <i class="cross-v"></i>
          <i class="pickbox"></i>

          <div class="panel">
            <h2>表格</h2>
            <div class="panel-tools">
              <button title="在上方插入行"><svg><use href="#t1"/></svg></button>
              <button title="在下方插入行"><svg><use href="#t2"/></svg></button>
              <button title="删除行"><svg><use href="#t3"/></svg></button>
              <i class="sep"></i>
              <button title="在左侧插入列"><svg><use href="#t4"/></svg></button>
              <button title="在右侧插入列"><svg><use href="#t5"/></svg></button>
              <button title="删除列"><svg><use href="#t6"/></svg></button>
              <i class="sep"></i>
              <button title="合并单元"><svg><use href="#t7"/></svg></button>
              <button class="arrow gray" title="合并选项"><svg><use href="#caret"/></svg></button>
              <button title="取消合并"><svg><use href="#t8"/></svg></button>
              <i class="sep"></i>
              <label class="combo w167"><i class="swatch"></i><select aria-label="背景填充"><option>无</option></select><svg><use href="#chev"/></svg></label>
              <i class="sep"></i>
              <button title="单元边框"><svg><use href="#t9"/></svg></button>
              <button title="对齐"><svg><use href="#t10"/></svg></button>
              <button class="arrow wide" title="对齐选项"><svg><use href="#caret"/></svg></button>
              <button title="锁定"><svg><use href="#t11"/></svg></button>
              <button class="arrow" title="锁定选项"><svg><use href="#caret"/></svg></button>
              <button class="fmt" title="数据格式">%..</button>
              <button class="fmt drop" title="数据格式选项"><svg><use href="#caret"/></svg></button>
              <i class="sep"></i>
              <button title="插入块"><svg><use href="#t12"/></svg></button>
              <button title="插入字段"><svg><use href="#t13"/></svg></button>
              <button title="插入公式"><svg><use href="#t14"/></svg></button>
              <button class="arrow" title="公式选项"><svg><use href="#caret"/></svg></button>
              <button title="管理单元内容"><svg><use href="#t15"/></svg></button>
              <i class="sep"></i>
              <button title="匹配单元"><svg><use href="#t16"/></svg></button>
              <label class="combo w265"><select aria-label="单元样式"><option>按行/列</option></select><svg><use href="#chev"/></svg></label>
              <i class="sep"></i>
              <button title="链接单元"><svg><use href="#t17"/></svg></button>
              <button title="下载更改"><svg><use href="#t18"/></svg></button>
            </div>
          </div>

          <div class="tip">数据格式...</div>
          <i class="callout"></i>
          <svg class="pointer" viewBox="0 0 340 128"><path d="M0 124L319 9l-3-8 22 4-14 17-1-4L3 127z"/></svg>
        </div>

        <div class="layouts">
          <button title="第一个"><svg viewBox="0 0 14 14"><path d="M1 1h2v12H1zM12 1v12L5 7z"/></svg></button>
          <button title="上一个"><svg viewBox="0 0 14 14"><path d="M10 1v12L3 7z"/></svg></button>
          <button title="下一个"><svg viewBox="0 0 14 14"><path d="M4 1v12l7-6z"/></svg></button>
          <button title="最后一个"><svg viewBox="0 0 14 14"><path d="M11 1h2v12h-2zM2 1v12l7-6z"/></svg></button>
          <button class="model">模型</button>
          <button class="layout">布局1<svg viewBox="0 0 60 25"><path d="M1 15l5 9h44L60 1"/></svg></button>
          <button class="add">+<svg viewBox="0 0 34 25"><path d="M2 12l6 12h12L32 1"/></svg></button>
        </div>
      </section>

      <div class="vbar right">
        <i class="hgrip"></i>
        <button title="删除"><svg><use href="#erase"/></svg></button>
        <button title="复制"><svg><use href="#copyobj"/></svg></button>
        <button title="镜像"><svg><use href="#mirror"/></svg></button>
        <button title="偏移"><svg><use href="#offset"/></svg></button>
        <button title="阵列"><svg><use href="#array"/></svg></button>
        <button title="移动"><svg><use href="#move"/></svg></button>
        <button title="旋转"><svg><use href="#rotate"/></svg></button>
        <button title="缩放"><svg><use href="#scale"/></svg></button>
        <button title="拉伸"><svg><use href="#stretch"/></svg></button>
        <button title="修剪"><svg><use href="#trim"/></svg></button>
        <button title="延伸"><svg><use href="#extend"/></svg></button>
        <button title="打断于点"><svg><use href="#breakpt"/></svg></button>
        <button title="打断"><svg><use href="#break"/></svg></button>
        <button title="合并"><svg><use href="#join"/></svg></button>
        <button title="倒角"><svg><use href="#chamfer"/></svg></button>
        <button title="圆角"><svg><use href="#fillet"/></svg></button>
        <button title="分解"><svg><use href="#explode"/></svg></button>
        <i class="hgrip"></i>
        <button title="前置"><svg><use href="#front"/></svg></button>
        <button title="后置"><svg><use href="#back"/></svg></button>
        <button title="置于对象之上"><svg><use href="#above"/></svg></button>
        <button title="置于对象之下"><svg><use href="#below"/></svg></button>
        <hr>
        <button title="文字前置"><svg><use href="#abc"/></svg></button>
      </div>
    </main>

    <section class="cmd">
      <div class="cmd-head"><button title="关闭"><svg><use href="#close"/></svg></button><button title="固定"><svg><use href="#pin"/></svg></button></div>
      <div class="cmd-body">
        <div class="history">
          <div class="log"><p>命令:</p><p>命令:</p></div>
          <div class="vscroll"><svg><use href="#chev"/></svg><svg><use href="#chev"/></svg></div>
        </div>
        <div class="prompt">
          <label for="cmdline">命令:</label>
          <input id="cmdline" type="text">
          <div class="hscroll"><button title="左">&lt;</button><i></i><button title="右">&gt;</button></div>
        </div>
      </div>
      <div class="ime">
        <svg class="ime-logo" viewBox="0 0 50 50"><path d="M2 12L37 2q4 0 4 4l7 32-3 4-32 6q-3 0-4-4L2 14z" fill="#f4511e"/><path d="M36 14Q12 10 13 19q2 4 19 6 9 2 4 8-5 5-24 4" fill="none" stroke="#fff" stroke-width="5"/></svg>
        <span>英</span>
        <svg viewBox="0 0 24 24"><path d="M14 2q8 5 7 12-4 9-13 8-4-1-7-5Q15 17 14 2z"/></svg>
        <svg viewBox="0 0 24 24"><circle cx="7" cy="5" r="3"/><path d="M15 11q6-2 6 4 0 5-5 8l-1-1q3-3 2-4-4-1-2-7z"/></svg>
        <svg viewBox="0 0 24 24"><path d="M7 1q5 5 10 0l7 5-3 6-3-1v11H6V11l-3 1-3-6z"/></svg>
        <svg viewBox="0 0 24 24"><rect x="2" y="2" width="9" height="9" rx="2" fill="#d76aa0"/><rect x="2" y="13" width="9" height="9" rx="2" fill="#d977b0"/><rect x="13" y="13" width="9" height="9" rx="2" fill="#8b7de0"/><circle cx="17" cy="7" r="4" fill="none" stroke="#a678e0" stroke-width="2"/></svg>
      </div>
    </section>

    <footer class="status">
      <div class="coords"><button>比例 1:100<svg><use href="#caret"/></svg></button><span>单位:mm</span><span>50321.30, 21352.52, 0.00</span></div>
      <div class="modes">
        <button title="捕捉"><svg><use href="#s1"/></svg></button>
        <button title="栅格"><svg><use href="#s2"/></svg></button>
        <button title="正交"><svg><use href="#s3"/></svg></button>
        <button class="on" title="极轴"><svg><use href="#s4"/></svg></button>
        <button class="on" title="对象捕捉"><svg><use href="#s5"/></svg></button>
        <button class="on" title="对象追踪"><svg><use href="#s6"/></svg></button>
        <button title="动态UCS"><svg><use href="#s7"/></svg></button>
        <button class="on" title="动态输入"><svg><use href="#s8"/></svg></button>
        <button title="线宽"><svg><use href="#s9"/></svg></button>
        <button title="选择循环"><svg><use href="#s10"/></svg></button>
        <button title="图层"><svg><use href="#s11"/></svg></button>
        <button class="on" title="透明度"><svg><use href="#s12"/></svg></button>
        <button title="注释比例"><svg><use href="#s13"/></svg></button>
        <button class="ratio">1:1<svg><use href="#caret"/></svg></button>
        <button title="注释可见性"><svg><use href="#s14"/></svg></button>
        <button title="自动缩放"><svg><use href="#s15"/></svg></button>
        <button class="on" title="图案"><svg><use href="#s16"/></svg></button>
        <button title="快捷特性"><svg><use href="#s17"/></svg></button>
        <button class="on" title="刷新"><svg><use href="#s18"/></svg></button>
      </div>
      <div class="words"><button class="on">联动</button><button>加粗</button><button>填充</button><button class="on">编组</button></div>
      <div class="tray">
        <button title="设置"><svg><use href="#gear"/></svg></button>
        <button class="blue" title="锁定"><svg><use href="#unlock"/></svg></button>
        <button title="提示"><svg><use href="#bulb"/></svg></button>
        <button title="硬件加速"><svg><use href="#chip"/></svg></button>
        <button title="全屏"><svg><use href="#full"/></svg></button>
        <span>GstarCAD</span>
      </div>
    </footer>
    <div class="taskbar"><i></i></div>
  </body>
</html>
```
FILE: styles.css
```css
* {
  box-sizing: border-box;
}
body {
  margin: 0;
  min-height: 100vh;
  display: flex;
  flex-direction: column;
  overflow: hidden;
  background: #bedaff;
  font-family: "Noto Sans", "Noto Sans CJK SC", sans-serif;
  font-size: 17px;
  color: #000;
}
button {
  display: flex;
  align-items: center;
  justify-content: center;
  padding: 0;
  border: 0;
  background: none;
  font: inherit;
  color: inherit;
  flex: none;
}
select {
  appearance: none;
  flex: 1;
  min-width: 0;
  padding: 0;
  border: 0;
  background: none;
  color: #000;
  font: 16px "Liberation Mono", "Noto Sans CJK SC", monospace;
  opacity: 1;
}
svg {
  width: 24px;
  height: 24px;
  flex: none;
  overflow: visible;
}
i {
  display: block;
  flex: none;
}
.sprite {
  display: none;
}

/* icon paints */
.d { fill: #555b61; }
.b { fill: #3d70ff; }
.o { fill: #ffb84d; }
.r { fill: #e03030; }
.w { fill: #dbe9ff; }
.s, .s2, .s3 { fill: none; stroke: #555b61; }
.s2, .bs { stroke-width: 2px; }
.s3 { stroke-width: 3px; }
.bs, .bs1 { fill: none; stroke: #3d70ff; }
.ws { fill: none; stroke: #fff; }
.k { fill: none; stroke: #000; stroke-width: 2px; }
.rl { stroke: #f00; stroke-width: 3px; }
.nf { fill: #dcefff; stroke: #4b6180; stroke-width: 2px; }
.n { fill: none; stroke: #3b4d6b; stroke-width: 2px; }
.bl { fill: none; stroke: #2f7de0; stroke-width: 2px; }
.x { fill: none; stroke: #d03030; stroke-width: 3px; }

/* title bar */
.titlebar {
  position: relative;
  display: flex;
  align-items: flex-start;
  height: 36px;
  background: #fff;
}
.quick {
  display: flex;
  align-items: center;
  height: 34px;
  margin-left: 67px;
  padding: 0 8px 8px 3px;
  background: linear-gradient(#f4f8fb, #e3eaee);
  border: 1px solid #a9b4bd;
  border-top: 0;
  border-radius: 0 0 14px 4px;
}
.qb {
  width: 30px;
}
.qb svg {
  width: 21px;
  height: 21px;
}
.qb.dim {
  opacity: 0.5;
}
.qc {
  width: 16px;
  color: #4f86c6;
}
.qc.gray {
  color: #888;
}
.qc svg,
.workspace svg,
.customize svg {
  width: 12px;
  height: 12px;
}
.workspace {
  display: flex;
  align-items: center;
  width: 182px;
  height: 33px;
  margin-bottom: -8px;
  padding: 0 12px 6px 2px;
  background: #e9f1fd;
  border: solid #a8c4e6;
  border-width: 0 1px;
  color: #4f86c6;
}
.workspace select {
  font: 17px "Noto Sans CJK SC", sans-serif;
}
.customize {
  width: 38px;
  height: 28px;
  color: #2a4f87;
}
.caption {
  flex: 1;
  margin: 0;
  padding-left: 36px;
  text-align: center;
  font-size: 18px;
  font-weight: 400;
  line-height: 26px;
}
.winbtns {
  display: flex;
  gap: 39px;
  width: 194px;
  padding-top: 1px;
}
.winbtns button {
  width: 32px;
  height: 32px;
}
.winbtns svg {
  width: 16px;
  height: 16px;
  fill: none;
  stroke: #000;
}
.applogo {
  position: absolute;
  z-index: 2;
  left: 6px;
  top: -5px;
  width: 56px;
  height: 56px;
  border: 2px solid #a3adb8;
  border-radius: 50%;
  background: radial-gradient(circle at 50% 70%, #fff 0, #dde2e8 55%, #b4bcc6 100%);
  box-shadow: 0 1px 2px #888;
}
.applogo svg {
  width: 30px;
  height: 28px;
}

/* menu */
.menubar {
  display: flex;
  align-items: center;
  gap: 21px;
  height: 29px;
  padding: 0 0 2px 58px;
  background: #dce9ee;
  color: #15428b;
}
.menubar a {
  color: inherit;
  text-decoration: none;
  white-space: nowrap;
}
.mdi {
  display: flex;
  margin-left: auto;
  margin-right: 1px;
}
.mdi button {
  width: 29px;
}
.mdi svg {
  width: 15px;
  height: 15px;
  fill: none;
  stroke: #6583ab;
}
.mdi .look {
  width: 48px;
}
.mdi .look svg {
  width: 12px;
  fill: #4f86c6;
  stroke: none;
}

/* docked toolbars */
.toolbars {
  display: flex;
  flex-direction: column;
  align-items: flex-start;
  gap: 2px;
  padding: 1px 0 2px;
  border-top: 1px solid #8f9aa8;
  box-shadow: inset 0 1px #fff;
  margin-top: 3px;
}
.toolbar {
  display: flex;
  align-items: center;
  height: 33px;
  background: linear-gradient(#e3efff, #c9dfff 50%, #b0d1ff);
}
.toolbar.grow {
  align-self: stretch;
}
.grip {
  align-self: stretch;
  width: 9px;
  background: radial-gradient(circle, #fff 1px, transparent 1px) 0 0 / 3px 3px, #8ebeff;
  border: solid #8ebeff;
  border-width: 4px 3px 4px 2px;
}
.grip.mid {
  width: 12px;
  margin: 0 1px 0 2px;
}
.tb {
  width: 35px;
  height: 32px;
}
.tb svg {
  width: 22px;
  height: 22px;
}
.tc {
  width: 25px;
  height: 32px;
  color: #777;
}
.tc svg {
  width: 12px;
  height: 12px;
}
.sep {
  width: 8px;
  height: 28px;
  background: linear-gradient(#6f7d8e, #6f7d8e) 4px 0 / 1px 100% no-repeat;
}
.combo {
  display: flex;
  align-items: center;
  height: 28px;
  flex: none;
  padding: 1px 8px 1px 1px;
  background: #e1e1e1;
  border: 1px solid #a9a9a9;
}
.combo > svg:last-child {
  width: 12px;
  height: 12px;
  margin-left: 8px;
  color: #444;
}
.combo .field {
  display: flex;
  align-items: center;
  flex: 1;
  height: 23px;
  background: #fff;
  min-width: 0;
  margin-left: 1px;
}
.field.indent {
  padding-left: 30px;
}
.combo.off {
  background: #ccc;
  border-color: #bbb;
}
.combo.off select {
  color: #777;
}
.combo.off > svg:last-child {
  color: #999;
}
.w167 { width: 167px; }
.w225 { width: 225px; }
.w265 { width: 265px; }
.w270 { width: 270px; }
.w450 { width: 450px; }
.combo.fill {
  flex: 1;
  border-right: 0;
}
.combo .st {
  width: 20px;
  height: 20px;
  margin-left: 5px;
}
.green {
  color: #2b8a2f;
}
.swatch {
  width: 19px;
  height: 19px;
  margin: 0 2px 0 3px;
  background: #fff;
  border: 1px solid #000;
}
.combo .sans {
  padding-left: 2px;
  font: 17px "Noto Sans", sans-serif;
}
.rule {
  width: 42px;
  margin: 0 2px 0 4px;
  border-top: 1px solid #000;
}
.rule.long {
  width: 112px;
  margin-left: 9px;
}

/* work area */
.workarea {
  display: flex;
  flex: 1;
}
.palette {
  display: flex;
  flex-direction: column;
  width: 165px;
  margin-right: 5px;
  background: #d5e4f2;
}
.palette-head {
  display: flex;
  align-items: center;
  gap: 8px;
  height: 33px;
  padding: 0 5px 2px 3px;
  background: #b8cfe9;
  color: #15428b;
}
.palette-head button:first-of-type {
  margin-left: auto;
}
.palette-head svg,
.cmd-head svg {
  width: 13px;
  height: 13px;
  color: #5d82b5;
}
.palette-body {
  display: flex;
  flex: 1;
  flex-direction: column;
  justify-content: space-between;
  margin: 3px 3px 3px 2px;
  padding: 1px 2px 3px 3px;
  background: #fff;
}
.commands button {
  width: 100%;
  height: 30px;
  justify-content: flex-start;
  gap: 4px;
  padding-left: 3px;
  font-size: 18px;
}
.commands svg {
  height: 20px;
}
.commands .tall {
  height: 24px;
}
.commands hr {
  margin: 1px 0;
  border: 0;
  border-top: 1px solid #3fb0ee;
}
.sub::after {
  content: "";
  margin: 0 12px 0 auto;
  border: 4px solid transparent;
  border-left-color: #444;
  border-right: 0;
}
.spread {
  display: flex;
  justify-content: space-between;
  width: 72px;
}
.spread b {
  font-weight: 400;
}
.groups {
  border: 1px solid #b0b8c0;
}
.groups button {
  width: 100%;
  height: 38px;
  justify-content: flex-start;
  gap: 10px;
  padding: 0 0 3px 6px;
  font-size: 18px;
  border-bottom: 1px solid #b0b8c0;
  background: linear-gradient(#e0edff, #c5ddff 48%, #aacbff 50%, #c4dcff);
}
.groups button:last-child {
  border-bottom: 0;
}
.groups .on {
  background: linear-gradient(#ffd9a0, #ffc074 40%, #fda63c 50%, #ffdc75);
}
.groups svg {
  width: 32px;
  height: 28px;
}
.vbar {
  display: flex;
  flex-direction: column;
  align-self: flex-start;
  width: 35px;
  background: linear-gradient(90deg, #a9cfff, #dce9ff);
}
.vbar button {
  height: 33px;
  padding: 0 2px 1px 0;
}
.vbar svg {
  width: 22px;
  height: 22px;
}
.hgrip {
  height: 10px;
  background: radial-gradient(circle, #fff 1px, transparent 1px) 0 0 / 3px 3px, #8ebeff;
  border: solid #8ebeff;
  border-width: 2px 4px 3px;
}
.vbar.right {
  height: 750px;
  overflow: hidden;
}
.vbar .hgrip:not(:first-child) {
  height: 13px;
}
.vbar hr {
  width: 31px;
  margin: 2px auto 3px;
  border: 0;
  border-top: 1px solid #8b96a3;
}

/* document */
.document {
  display: flex;
  flex: 1;
  flex-direction: column;
  min-width: 0;
}
.doctabs {
  position: relative;
  height: 25px;
  background: #f0f0f0;
  border-top: 1px solid #ccc;
}
.doctabs button {
  position: relative;
  height: 25px;
  padding: 3px 0 0 35px;
  font: 15px "Liberation Mono", monospace;
}
.doctabs svg {
  position: absolute;
  left: 1px;
  bottom: 0;
  width: 152px;
  height: 25px;
  stroke: #b98d3c;
}
.canvas {
  position: relative;
  flex: 1;
  overflow: hidden;
  background: #222930;
  border: solid #8a8a8a;
  border-width: 1px 2px 0 1px;
  border-right-color: #f0f0f0;
}
.sheet {
  position: absolute;
  left: 302px;
  top: 53px;
  width: 818px;
  table-layout: fixed;
  border-spacing: 0;
  border: solid #fff;
  border-width: 1px 0 0 1px;
  color: #fff;
  font: 300 34px/40px Lato, sans-serif;
}
.sheet th,
.sheet td {
  height: 71px;
  padding: 0 0 6px;
  text-align: center;
  border: solid #fff;
  border-width: 0 1px 1px 0;
}
.sheet .short th,
.sheet .short td {
  height: 70px;
}
.sheet td:nth-child(2) {
  text-align: right;
  padding-right: 10px;
}
.sheet th {
  background: #adadad;
  color: #000;
  font-weight: 300;
  padding: 3px 0 0;
}
.sheet thead th {
  height: 48px;
  padding-top: 1px;
  border-right-color: #000;
}
.sheet thead th:first-child {
  width: 82px;
}
.sheet thead th:last-child {
  border-right-color: #fff;
}
.sheet tbody th,
.sheet thead th:first-child {
  border-bottom-color: #000;
}
.sheet tbody tr:last-child th {
  border-bottom-color: #fff;
}
.sheet .first th,
.sheet .first td {
  height: 86px;
}
.sheet .hot {
  background: #ffd38c;
}
.sheet .picked {
  position: relative;
  box-shadow: 0 0 0 1px #b98f56;
  border-color: #b98f56;
}
/* grips sit on the middle of each edge of the picked cell */
.picked i {
  position: absolute;
  width: 11px;
  height: 11px;
  margin: -6px;
  background: #0080ff;
  border: 1px solid #3c5a80;
}
.picked .n { left: 50%; top: 0; }
.picked .e { left: 100%; top: 50%; }
.picked .s { left: 50%; top: 100%; }
.picked .w { left: 0; top: 50%; }
.ucs {
  position: absolute;
  left: 19px;
  bottom: 14px;
  width: 110px;
  height: 110px;
  fill: none;
  stroke: #fff;
}
.ucs text {
  font: 300 24px Lato, sans-serif;
  fill: #fff;
  stroke: none;
}
.cross-h,
.cross-v,
.pickbox {
  position: absolute;
}
.cross-h {
  left: 0;
  right: 0;
  top: 307px;
  height: 1px;
  background: #fff;
}
.cross-v {
  left: 686px;
  top: 0;
  bottom: 0;
  width: 1px;
  background: #fff;
}
.pickbox {
  left: 683px;
  top: 304px;
  width: 7px;
  height: 7px;
  border: 1px solid #fff;
}

/* floating table panel */
.panel {
  position: absolute;
  left: 12px;
  top: 122px;
  width: 1313px;
  background: #fff;
}
.panel h2 {
  margin: 0;
  padding: 0 11px 2px;
  color: #999;
  font-size: 17px;
  font-weight: 400;
  line-height: 43px;
}
.panel-tools {
  display: flex;
  align-items: center;
  height: 33px;
  padding-left: 1px;
  background: #f0f0f0;
  border-bottom: 1px solid #fff;
}
.panel-tools button {
  width: 32px;
  height: 30px;
}
.panel-tools .arrow {
  width: 16px;
}
.panel-tools .arrow.wide {
  width: 26px;
}
.panel-tools .arrow.gray {
  color: #777;
}
.panel-tools .arrow svg,
.panel-tools .drop svg {
  width: 15px;
  height: 15px;
}
.panel-tools .fmt {
  width: 40px;
  background: #d6e6f2;
  color: #3b4656;
  font-weight: 700;
}
.panel-tools .fmt.drop {
  width: 24px;
  border-left: 1px solid #a8d2f0;
  color: #000;
}
.panel-tools .combo {
  height: 27px;
  align-self: flex-end;
}
.tip {
  position: absolute;
  left: 650px;
  top: 215px;
  padding: 0 6px;
  background: #fff;
  border: 1px solid #767676;
  color: #555;
  font-size: 17px;
  line-height: 27px;
}
.callout {
  position: absolute;
  left: 619px;
  top: 161px;
  width: 75px;
  height: 48px;
  border: 4px solid #ff2010;
  border-radius: 4px;
}
.pointer {
  position: absolute;
  left: 278px;
  top: 214px;
  width: 340px;
  height: 128px;
  fill: #ff2010;
}

.layouts {
  display: flex;
  height: 30px;
  padding-bottom: 3px;
  background: #d5e4f2;
  border-top: 3px double #777;
}
.layouts button {
  width: 22px;
}
.layouts button > svg {
  width: 13px;
  height: 13px;
  fill: #4a7ab8;
}
.layouts .model {
  width: 60px;
  color: #fff;
  font-weight: 700;
  background: #222930;
  clip-path: polygon(0 0, 100% 0, 80% 100%, 20% 100%);
}
.layouts .layout,
.layouts .add {
  position: relative;
  width: 48px;
}
.layouts .add {
  width: 28px;
}
.layouts .layout > svg,
.layouts .add > svg {
  position: absolute;
  left: 0;
  top: 0;
  width: 60px;
  height: 25px;
  fill: none;
  stroke: #8f9fc4;
}
.layouts .add > svg {
  width: 34px;
}

/* command line */
.cmd {
  position: relative;
  display: flex;
  height: 90px;
  margin-top: 4px;
  border-top: 1px solid #666;
}
.cmd-head {
  display: flex;
  flex-direction: column;
  gap: 10px;
  width: 32px;
  padding: 6px 0 0 5px;
  background: #b8cfe9;
}
.cmd-head button {
  width: 13px;
}
.cmd-body {
  flex: 1;
  display: flex;
  flex-direction: column;
  background: #fff;
  border-left: 1px solid #666;
  font: 20px/26px "Noto Sans CJK SC", sans-serif;
}
.history {
  display: flex;
  height: 61px;
  border-bottom: 1px solid #666;
}
.log {
  flex: 1;
  padding: 5px 4px 0;
}
.log p {
  margin: 0;
}
.vscroll {
  display: flex;
  flex-direction: column;
  justify-content: space-between;
  width: 25px;
  margin-right: 2px;
  padding: 10px 5px;
  background: #f0f0f0;
  color: #555;
}
.vscroll svg {
  width: 14px;
  height: 12px;
  stroke-width: 2px;
}
.vscroll svg:first-child {
  transform: rotate(180deg);
}
.prompt {
  display: flex;
  align-items: center;
  flex: 1;
  padding: 0 0 3px 4px;
  border-bottom: 1px solid #ddd;
}
.prompt input {
  flex: 1;
  height: 24px;
  border: 0;
  outline: 0;
  font: inherit;
}
.hscroll {
  display: flex;
  width: 120px;
  height: 24px;
  margin-right: 28px;
  background: #f0f0f0;
}
.hscroll button {
  width: 26px;
  color: #555;
  font-weight: 700;
}
.hscroll i {
  width: 26px;
  margin-right: auto;
  background: #cdcdcd;
}
.ime {
  position: absolute;
  right: 11px;
  top: 16px;
  display: flex;
  align-items: center;
  gap: 12px;
  width: 209px;
  height: 39px;
  padding-left: 42px;
  background: linear-gradient(90deg, #fff 75%, #e6f5e8 85%, #f5e6fa);
  border: 1px solid #f0c0ec;
  border-bottom: 3px solid #f35fb8;
  border-radius: 4px 8px 8px 4px;
  color: #8488e8;
  font-weight: 700;
  font-size: 22px;
}
.ime svg {
  width: 22px;
  height: 22px;
  fill: #8488e8;
}
.ime .ime-logo {
  position: absolute;
  left: -15px;
  top: -10px;
  width: 48px;
  height: 47px;
}

/* status bar */
.status {
  display: flex;
  height: 36px;
  background: linear-gradient(#e0ecfc, #cfe0f6 20%, #b3cff0 24%, #c9dcf8);
  border-top: 1px solid #4a7ab8;
  color: #15428b;
}
.coords {
  display: flex;
  align-items: center;
  gap: 7px;
  width: 434px;
  padding: 0 0 2px 3px;
  white-space: nowrap;
  font-size: 16px;
}
.coords svg,
.ratio svg {
  width: 12px;
  height: 12px;
  margin-left: 3px;
  color: #5a86bd;
}
.modes,
.words {
  display: flex;
  align-items: center;
  padding-bottom: 1px;
}
.modes button {
  width: 30px;
  height: 31px;
}
.modes svg {
  width: 21px;
  height: 21px;
}
.modes .ratio {
  width: 36px;
  font-size: 16px;
}
.modes .ratio svg {
  width: 12px;
  height: 12px;
}
.status .on {
  background: linear-gradient(#fffbe8, #ffeeb0 50%, #ffdc60 52%, #fff0a8);
  border: 1px solid #c8b070;
  border-radius: 2px;
  background-clip: padding-box;
}
.words {
  margin-left: auto;
  margin-right: 9px;
}
.words button {
  width: 40px;
  height: 28px;
}
.tray {
  display: flex;
  align-items: center;
  padding: 0 3px 2px 6px;
  background: linear-gradient(#b8d2f4, #8db2e6 25%, #7da4da);
  border-left: 1px solid #eef5ff;
}
.tray button {
  width: 30px;
}
.tray .blue {
  color: #3d70ff;
}
.tray svg {
  width: 19px;
  height: 19px;
}
.tray span {
  padding-left: 3px;
  font-size: 16px;
}
.taskbar {
  height: 5px;
  background: #1d1b24;
}
.taskbar i {
  width: 73px;
  height: 5px;
  margin-left: 668px;
  background: #55545b;
}
```
